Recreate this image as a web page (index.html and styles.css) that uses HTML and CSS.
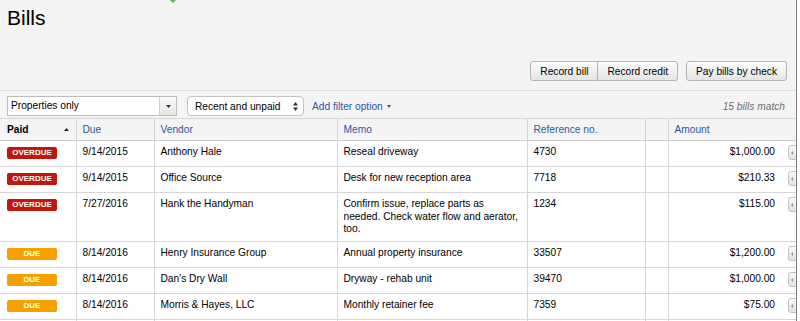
FILE: index.html
```html
<!DOCTYPE html>
<html lang="en">
<head>
  <meta charset="UTF-8" />
  <title>Bills</title>
  <link rel="stylesheet" href="styles.css">
</head>
<body>
  <div class="page">
    <span class="notice-tip"></span>
    <h1>Bills</h1>

    <div class="actions">
      <div class="btn-group">
        <button class="btn">Record bill</button>
        <button class="btn">Record credit</button>
      </div>
      <button class="btn">Pay bills by check</button>
    </div>

    <div class="filters">
      <div class="combo">
        <span class="combo-text">Properties only</span>
        <span class="combo-btn">
          <svg width="5" height="3" viewBox="0 0 5 3"><path d="M0 0h5L2.5 3z" fill="#333"/></svg>
        </span>
      </div>
      <div class="select">
        <span>Recent and unpaid</span>
        <svg width="5" height="9" viewBox="0 0 5 9"><path d="M0 3.5L2.5 0 5 3.5zM0 5.5h5L2.5 9z" fill="#333"/></svg>
      </div>
      <a class="add-filter">Add filter option <span class="caret"></span></a>
      <span class="match-count">15 bills match</span>
    </div>

    <table class="bills">
      <colgroup>
        <col style="width:76px"><col style="width:78px"><col style="width:183px"><col style="width:190px">
        <col style="width:118px"><col style="width:23px"><col style="width:117px"><col style="width:12px">
      </colgroup>
      <thead>
        <tr>
          <th class="paid">Paid <svg class="sort" width="5" height="3" viewBox="0 0 5 3"><path d="M2.5 0L5 3H0z" fill="#222"/></svg></th>
          <th>Due</th>
          <th>Vendor</th>
          <th>Memo</th>
          <th>Reference no.</th>
          <th></th>
          <th>Amount</th>
          <th class="menu"></th>
        </tr>
      </thead>
      <tbody>
        <tr>
          <td class="paid"><span class="badge overdue">OVERDUE</span></td>
          <td>9/14/2015</td><td>Anthony Hale</td><td>Reseal driveway</td><td>4730</td><td></td>
          <td class="amount">$1,000.00</td><td class="menu"><span class="row-btn"></span></td>
        </tr>
        <tr>
          <td class="paid"><span class="badge overdue">OVERDUE</span></td>
          <td>9/14/2015</td><td>Office Source</td><td>Desk for new reception area</td><td>7718</td><td></td>
          <td class="amount">$210.33</td><td class="menu"><span class="row-btn"></span></td>
        </tr>
        <tr>
          <td class="paid"><span class="badge overdue">OVERDUE</span></td>
          <td>7/27/2016</td><td>Hank the Handyman</td><td>Confirm issue, replace parts as needed. Check water flow and aerator, too.</td><td>1234</td><td></td>
          <td class="amount">$115.00</td><td class="menu"><span class="row-btn"></span></td>
        </tr>
        <tr>
          <td class="paid"><span class="badge due">DUE</span></td>
          <td>8/14/2016</td><td>Henry Insurance Group</td><td>Annual property insurance</td><td>33507</td><td></td>
          <td class="amount">$1,200.00</td><td class="menu"><span class="row-btn"></span></td>
        </tr>
        <tr>
          <td class="paid"><span class="badge due">DUE</span></td>
          <td>8/14/2016</td><td>Dan's Dry Wall</td><td>Dryway - rehab unit</td><td>39470</td><td></td>
          <td class="amount">$1,000.00</td><td class="menu"><span class="row-btn"></span></td>
        </tr>
        <tr>
          <td class="paid"><span class="badge due">DUE</span></td>
          <td>8/14/2016</td><td>Morris &amp; Hayes, LLC</td><td>Monthly retainer fee</td><td>7359</td><td></td>
          <td class="amount">$75.00</td><td class="menu"><span class="row-btn"></span></td>
        </tr>
        <tr>
          <td class="paid"></td><td></td><td></td><td></td><td></td><td></td><td></td><td class="menu"></td>
        </tr>
      </tbody>
    </table>
  </div>
</body>
</html>
```

FILE: styles.css
```css
:root {
  --bg: #f4f4f4;
  --text: #000;
  --link: #2b58a6;
  --line: #d6d6d6;
  --overdue: #c1170f;
  --due: #f5a000;
}

html {
  background: #ffffff;
}

body {
  margin: 0;
  font-family: "Liberation Sans", Arial, sans-serif;
  font-size: 10.2px;
  color: var(--text);
}

.page {
  position: relative;
  width: 797px;
  height: 321px;
  background: var(--bg);
  border-right: 1px solid #7d7d7d;
  box-sizing: border-box;
  overflow: hidden;
}

.notice-tip {
  position: absolute;
  top: 0;
  left: 170px;
  border-left: 3px solid transparent;
  border-right: 3px solid transparent;
  border-top: 3px solid #5db866;
}

h1 {
  margin: 0;
  padding: 6px 7px 0;
  font-size: 21px;
  line-height: 24px;
  font-weight: normal;
  color: #000;
}

.actions {
  display: flex;
  justify-content: flex-end;
  gap: 8px;
  padding: 31px 9px 9px 0;
  border-bottom: 1px solid #dcdcdc;
}

.btn-group {
  display: flex;
}

.btn {
  height: 20px;
  padding: 0 9px;
  font-family: inherit;
  font-size: 10.2px;
  color: #000;
  background: linear-gradient(#fdfdfd, #e4e4e4);
  border: 1px solid #b5b5b5;
  border-radius: 3px;
}

.btn-group .btn:first-child {
  border-radius: 3px 0 0 3px;
}

.btn-group .btn:last-child {
  border-left: none;
  border-radius: 0 3px 3px 0;
}

.filters {
  display: flex;
  align-items: center;
  height: 20px;
  padding: 5px 11px 2px 7px;
}

.combo {
  display: flex;
  width: 170px;
  height: 20px;
  box-sizing: border-box;
  border: 1px solid #bdbdbd;
  background: #fff;
}

.combo-text {
  flex: 1;
  padding-left: 3px;
  line-height: 18px;
}

.combo-btn {
  width: 16px;
  display: flex;
  align-items: center;
  justify-content: center;
  border-left: 1px solid #cfcfcf;
  background: linear-gradient(#fafafa, #e6e6e6);
}

.select {
  display: flex;
  align-items: center;
  justify-content: space-between;
  width: 117px;
  height: 20px;
  box-sizing: border-box;
  margin-left: 10px;
  padding: 0 5px 0 7px;
  background: #fff;
  border: 1px solid #c4c4c4;
  border-radius: 4px;
}

.add-filter {
  margin-left: 8px;
  color: var(--link);
}

.caret {
  display: inline-block;
  vertical-align: middle;
  margin-left: 1px;
  border-left: 2.5px solid transparent;
  border-right: 2.5px solid transparent;
  border-top: 3px solid var(--link);
}

.match-count {
  margin-left: auto;
  font-style: italic;
  color: #6f6f6f;
}

.bills {
  table-layout: fixed;
  width: 797px;
  border-collapse: collapse;
}

.bills th {
  height: 21px;
  padding: 0 6px;
  text-align: left;
  font-weight: normal;
  color: var(--link);
  border-top: 1px solid #d8d8d8;
  border-bottom: 1px solid #cdcdcd;
  border-left: 1px solid var(--line);
}

.bills th.paid {
  font-weight: bold;
  color: #000;
  padding-left: 7px;
}

.sort {
  float: right;
  margin-top: 4px;
  margin-right: 1px;
}

.bills tbody tr {
  height: 26px;
}

.bills td {
  padding: 5px 6px;
  line-height: 12.7px;
  vertical-align: top;
  background: #fff;
  border-bottom: 1px solid var(--line);
  border-left: 1px solid var(--line);
}

.bills .paid {
  border-left: none;
  padding-left: 7px;
}

.bills td.amount {
  text-align: right;
  padding-right: 10px;
}

.bills .menu {
  border-left: none;
  padding: 0 0 0 3px;
}

.bills td.menu {
  padding-top: 4px;
}

.badge {
  display: block;
  width: 50px;
  height: 12px;
  margin-top: 1px;
  border-radius: 2px;
  font-size: 8px;
  font-weight: bold;
  line-height: 12px;
  text-align: center;
  color: #fff;
}

.badge.overdue {
  background: var(--overdue);
}

.badge.due {
  background: var(--due);
}

.row-btn {
  display: block;
  position: relative;
  width: 14px;
  height: 15px;
  box-sizing: border-box;
  border: 1px solid #c2c2c2;
  border-radius: 3px;
  background: linear-gradient(#fafafa, #e2e2e2);
}

.row-btn::before {
  content: "";
  position: absolute;
  top: 5px;
  left: 2px;
  border-top: 2px solid transparent;
  border-bottom: 2px solid transparent;
  border-right: 2px solid #8a8a8a;
}
```
